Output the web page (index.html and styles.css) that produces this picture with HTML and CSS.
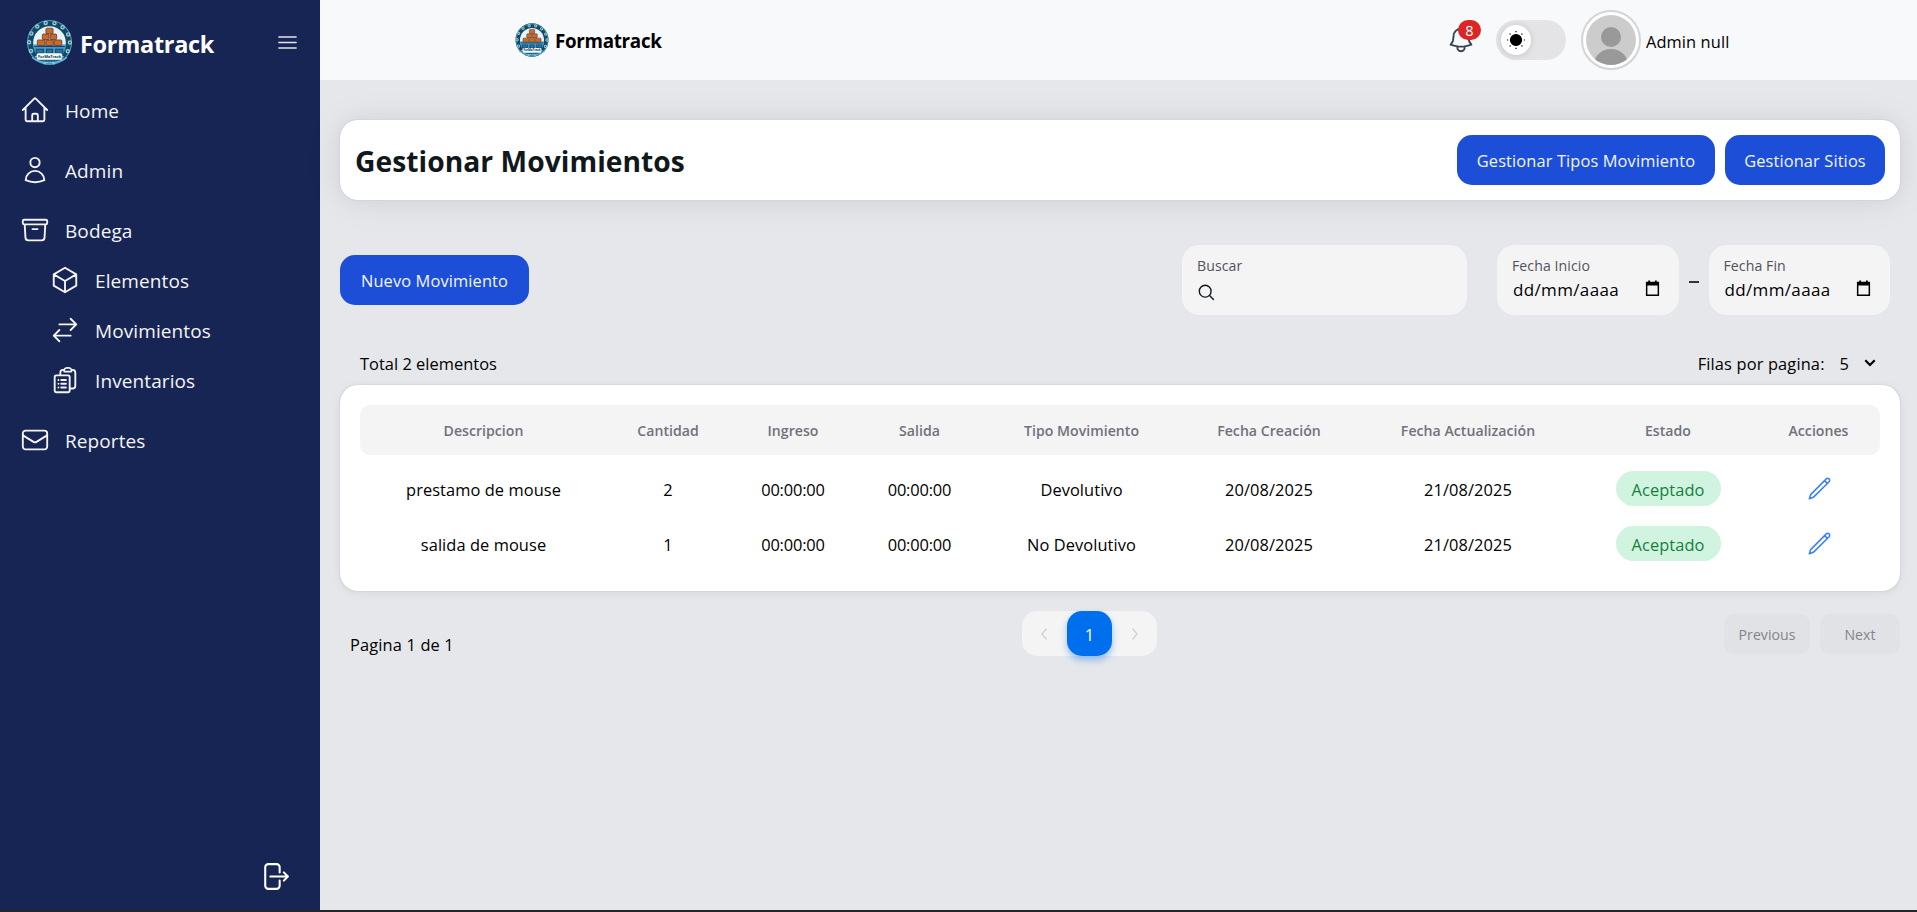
FILE: index.html
```html
<!DOCTYPE html>
<html lang="es">
<head>
<meta charset="utf-8">
<title>Formatrack</title>
<link rel="stylesheet" href="styles.css">
</head>
<body>
<svg class="defs" width="0" height="0">
  <symbol id="calendar" viewBox="0 0 14 16">
    <path d="M1.500 2.300h11v12h-11z" fill="none" stroke="#000" stroke-width="1.400"/>
    <path d="M1 2h12v3.200H1zM3 .4h1.700V3H3zM9.300.4H11V3H9.300z"/>
  </symbol>
  <symbol id="pencil" viewBox="0 0 24 24">
    <path d="m16.862 4.487 1.687-1.688a1.875 1.875 0 1 1 2.652 2.652L6.832 19.820a4.500 4.500 0 0 1-1.897 1.130l-2.685.8.8-2.685a4.500 4.500 0 0 1 1.130-1.897L16.863 4.487Zm0 0L19.500 7.125"/>
  </symbol>
</svg>
<div class="app">
  <aside class="sidebar">
    <div class="brand">
      <svg class="brand-logo" viewBox="0 0 48 46">
        <g id="logo">
          <ellipse cx="24" cy="23" rx="22" ry="22.300" fill="#124a63"/>
          <ellipse cx="24" cy="23" rx="21.500" ry="21.500" fill="none" stroke="#4c9cba" stroke-width="1"/>
          <ellipse cx="24" cy="23" rx="20" ry="19.500" fill="none" stroke="#9cc9d6" stroke-width="4.400" stroke-linecap="round" stroke-dasharray="0 8.860"/>
          <ellipse cx="24" cy="23" rx="20" ry="19.500" fill="none" stroke="#25637a" stroke-width="1.800" stroke-linecap="round" stroke-dasharray="0 8.860"/>
          <ellipse cx="24" cy="23" rx="16" ry="16" fill="#e4f3fa"/>
          <path d="M8 25h32a16 16 0 0 1-32 0Z" fill="#3d9bd0"/>
          <g fill="#c9692c" stroke="#56331f" stroke-width=".7">
            <rect x="20.500" y="9" width="7" height="5.500" rx="1"/>
            <rect x="17" y="14.700" width="6.500" height="5.500" rx="1"/><rect x="24.500" y="14.700" width="6.500" height="5.500" rx="1"/>
            <rect x="12" y="20.500" width="7.500" height="5.500" rx="1"/><rect x="20.300" y="20.500" width="7.500" height="5.500" rx="1"/><rect x="28.600" y="20.500" width="7.500" height="5.500" rx="1"/>
          </g>
          <path d="M9 27h30M11 29.500h7v4h-7zm10 0h6v4h-6zm9 0h7v4h-7z" fill="#2d719a" stroke="#174966" stroke-width="1"/>
          <path d="M7 37.500a22 15 0 0 0 34 0" fill="#1d6689" stroke="#65b9dc" stroke-width="1.500"/>
          <rect x="11.500" y="33.500" width="25" height="6.500" rx="1.800" fill="#f3fbfd"/>
          <path d="M19 42.300h10" stroke="#9ed4e5" stroke-width="1" stroke-dasharray="1.400 1.200"/>
          <text x="24" y="38.300" text-anchor="middle" font-size="4" letter-spacing="-.1" font-weight="700" fill="#173e4d">ForMaTrack</text>
        </g>
      </svg>
      <span class="brand-name">Formatrack</span>
      <svg class="icon icon-menu" viewBox="0 0 24 24"><path d="M3.750 6.750h16.500M3.750 12h16.500m-16.500 5.250h16.500"/></svg>
    </div>
    <nav class="nav">
      <a class="nav-item"><svg class="icon" viewBox="0 0 24 24"><path d="m2.250 12 8.954-8.955c.44-.439 1.152-.439 1.591 0L21.750 12M4.500 9.750v10.125c0 .621.504 1.125 1.125 1.125H9.750v-4.875c0-.621.504-1.125 1.125-1.125h2.250c.621 0 1.125.504 1.125 1.125V21h4.125c.621 0 1.125-.504 1.125-1.125V9.750M8.250 21h8.250"/></svg><span>Home</span></a>
      <a class="nav-item"><svg class="icon" viewBox="0 0 24 24"><path d="M15.750 6a3.750 3.750 0 1 1-7.500 0 3.750 3.750 0 0 1 7.500 0ZM4.501 20.118a7.500 7.500 0 0 1 14.998 0A17.933 17.933 0 0 1 12 21.750c-2.676 0-5.216-.584-7.499-1.632Z"/></svg><span>Admin</span></a>
      <a class="nav-item"><svg class="icon" viewBox="0 0 24 24"><path d="m20.250 7.500-.625 10.632a2.250 2.250 0 0 1-2.247 2.118H6.622a2.250 2.250 0 0 1-2.247-2.118L3.750 7.500M10 11.250h4M3.375 7.500h17.250c.621 0 1.125-.504 1.125-1.125v-1.500c0-.621-.504-1.125-1.125-1.125H3.375c-.621 0-1.125.504-1.125 1.125v1.500c0 .621.504 1.125 1.125 1.125Z"/></svg><span>Bodega</span></a>
      <div class="subnav">
        <a class="nav-item sub"><svg class="icon" viewBox="0 0 24 24"><path d="m21 7.500-9-5.250L3 7.500m18 0-9 5.250m9-5.250v9l-9 5.250M3 7.500l9 5.250M3 7.500v9l9 5.250m0-9v9"/></svg><span>Elementos</span></a>
        <a class="nav-item sub"><svg class="icon" viewBox="0 0 24 24"><path d="M7.500 21 3 16.500m0 0L7.500 12M3 16.500h13.500m0-13.500L21 7.500m0 0L16.500 12M21 7.500H7.500"/></svg><span>Movimientos</span></a>
        <a class="nav-item sub"><svg class="icon" viewBox="0 0 24 24"><path d="M9 12h3.750M9 15h3.750M9 18h3.750m3 .75H18a2.250 2.250 0 0 0 2.250-2.250V6.108c0-1.135-.845-2.098-1.976-2.192a48.424 48.424 0 0 0-1.123-.08m-5.801 0c-.065.21-.1.433-.1.664 0 .414.336.75.75.75h4.500a.75.75 0 0 0 .75-.75 2.250 2.250 0 0 0-.1-.664m-5.800 0A2.251 2.251 0 0 1 13.500 2.250H15c1.012 0 1.867.668 2.150 1.586m-5.800 0c-.376.023-.75.05-1.124.08C9.095 4.010 8.250 4.973 8.250 6.108V8.250m0 0H4.875c-.621 0-1.125.504-1.125 1.125v11.250c0 .621.504 1.125 1.125 1.125h9.750c.621 0 1.125-.504 1.125-1.125V9.375c0-.621-.504-1.125-1.125-1.125H8.250ZM6.750 12h.008v.008H6.750V12Zm0 3h.008v.008H6.750V15Zm0 3h.008v.008H6.750V18Z"/></svg><span>Inventarios</span></a>
      </div>
      <a class="nav-item"><svg class="icon" viewBox="0 0 24 24"><path d="M21.750 6.750v10.500a2.250 2.250 0 0 1-2.250 2.250h-15a2.250 2.250 0 0 1-2.250-2.250V6.750m19.500 0A2.250 2.250 0 0 0 19.500 4.500h-15a2.250 2.250 0 0 0-2.250 2.250m19.500 0v.243a2.250 2.250 0 0 1-1.070 1.916l-7.500 4.615a2.250 2.250 0 0 1-2.360 0L3.320 8.910a2.250 2.250 0 0 1-1.070-1.916V6.750"/></svg><span>Reportes</span></a>
    </nav>
    <svg class="icon icon-logout" viewBox="0 0 24 24"><path d="M15.750 9V5.250A2.250 2.250 0 0 0 13.500 3h-6a2.250 2.250 0 0 0-2.250 2.250v13.500A2.250 2.250 0 0 0 7.500 21h6a2.250 2.250 0 0 0 2.250-2.250V15m3 0 3-3m0 0-3-3m3 3H9"/></svg>
  </aside>

  <div class="page">
    <header class="topbar">
      <div class="top-brand"><svg class="top-logo" viewBox="0 0 48 46"><use href="#logo"/></svg><span class="top-name">Formatrack</span></div>
      <div class="top-tools">
        <div class="bell">
          <svg class="icon" viewBox="0 0 24 24"><path d="M14.857 17.082a23.848 23.848 0 0 0 5.454-1.310A8.967 8.967 0 0 1 18 9.750V9A6 6 0 0 0 6 9v.75a8.967 8.967 0 0 1-2.312 6.022c1.733.64 3.560 1.085 5.455 1.310m5.714 0a24.255 24.255 0 0 1-5.714 0m5.714 0a3 3 0 1 1-5.714 0"/></svg>
          <span class="badge">8</span>
        </div>
        <div class="toggle"><div class="thumb">
          <svg class="sun" viewBox="0 0 20 20"><circle cx="10" cy="10" r="5.500"/><path d="M10 1v1.200M10 17.800V19M1 10h1.200M17.800 10H19M3.600 3.600l.9.9M15.500 15.500l.9.9M3.600 16.400l.9-.9M15.500 4.500l.9-.9"/></svg>
        </div></div>
        <div class="avatar"><svg class="avatar-img" viewBox="0 0 50 50"><path fill="#ccc" d="M0 0h50v50H0z"/><circle cx="25" cy="22" r="10" fill="#999"/><path d="M8 50c0-9 7-16 17-16s17 7 17 16z" fill="#999"/></svg></div>
        <span class="user">Admin null</span>
      </div>
    </header>

    <main class="main">
      <section class="title-card">
        <h1 class="title">Gestionar Movimientos</h1>
        <div class="actions"><button class="btn wide">Gestionar Tipos Movimiento</button><button class="btn sites">Gestionar Sitios</button></div>
      </section>

      <section class="filters">
        <button class="btn new">Nuevo Movimiento</button>
        <div class="fields">
          <div class="field search"><span class="label">Buscar</span>
            <svg class="icon-search" viewBox="0 0 17 17"><circle cx="7.200" cy="7.200" r="5.900"/><path d="m11.800 11.800 3.600 3.700"/></svg></div>
          <div class="field date"><span class="label">Fecha Inicio</span><div class="value"><span>dd/mm/aaaa</span><svg class="cal"><use href="#calendar"/></svg></div></div>
          <span class="dash"></span>
          <div class="field date"><span class="label">Fecha Fin</span><div class="value"><span>dd/mm/aaaa</span><svg class="cal"><use href="#calendar"/></svg></div></div>
        </div>
      </section>

      <div class="summary">
        <span class="total">Total 2 elementos</span>
        <div class="rows-per"><span class="rows-label">Filas por pagina:</span><span>5</span><svg class="chev" viewBox="0 0 12 8"><path d="m1.300 1.300 4.700 4.700 4.700-4.700"/></svg></div>
      </div>

      <section class="table-card">
        <div class="row head"><span>Descripcion</span><span>Cantidad</span><span>Ingreso</span><span>Salida</span><span>Tipo Movimiento</span><span>Fecha Creación</span><span>Fecha Actualización</span><span>Estado</span><span>Acciones</span></div>
        <div class="row item"><span>prestamo de mouse</span><span>2</span><span class="time">00:00:00</span><span class="time">00:00:00</span><span>Devolutivo</span><span>20/08/2025</span><span>21/08/2025</span><span class="chip">Aceptado</span><svg class="edit"><use href="#pencil"/></svg></div>
        <div class="row item"><span>salida de mouse</span><span>1</span><span class="time">00:00:00</span><span class="time">00:00:00</span><span>No Devolutivo</span><span>20/08/2025</span><span>21/08/2025</span><span class="chip">Aceptado</span><svg class="edit"><use href="#pencil"/></svg></div>
      </section>

      <footer class="footer">
        <span class="page-info">Pagina 1 de 1</span>
        <div class="pager">
          <svg class="arrow" viewBox="0 0 10 14"><path d="M6.500 1.500 2 7l4.500 5.500"/></svg>
          <span class="current">1</span>
          <svg class="arrow" viewBox="0 0 10 14"><path d="M2.500 1.500 7 7l-4.500 5.500"/></svg>
        </div>
        <div class="steps"><button class="step prev">Previous</button><button class="step next">Next</button></div>
      </footer>
    </main>
  </div>
</div>
</body>
</html>
```
FILE: styles.css
```css
* { box-sizing: border-box; }
body {
  margin: 0;
  height: 912px;
  overflow: hidden;
  border-bottom: 2px solid #252528;
  font-family: "Open Sans", "Noto Sans", sans-serif;
  font-size: 16.4px;
  color: #000;
  letter-spacing: 0.03px;
}
button { font: inherit; letter-spacing: inherit; border: 0; padding: 0; }
.defs { position: absolute; }
.app { display: flex; height: 910px; }
.icon { width: 30px; height: 30px; flex: none; fill: none; stroke: currentColor; stroke-width: 1.5; stroke-linecap: round; stroke-linejoin: round; }

.sidebar { width: 320px; flex: none; display: flex; flex-direction: column; background: #172554; color: #f4f4f5; }
.brand { display: flex; align-items: center; height: 85px; padding: 0 20px 0 25px; }
.brand-logo { width: 49px; height: 47px; flex: none; }
.brand-name { margin-left: 6px; padding-top: 2px; font-size: 23.5px; font-weight: 700; letter-spacing: -0.3px; color: #fff; }
.icon-menu { width: 25px; height: 25px; margin-left: auto; color: #e4e4e7; }
.nav { display: flex; flex-direction: column; margin-top: -5px; }
.nav-item { display: flex; align-items: center; gap: 15px; height: 60px; padding: 0 20px; font-size: 19px; font-weight: 500; letter-spacing: 0.1px; }
.subnav { margin: -5px 0 5px; padding-left: 30px; }
.sub { height: 50px; }
.nav-item span { padding-top: 1px; }
.icon-logout { width: 33px; height: 33px; margin: auto 29px 17px auto; color: #fff; }

.page { flex: 1; display: flex; flex-direction: column; background: #e5e7eb; }
.topbar { height: 80px; display: flex; align-items: center; justify-content: space-between; padding: 0 187px 0 194px; background: #f8f9fb; color: #000; }
.top-brand { display: flex; align-items: center; gap: 5px; }
.top-logo { width: 36px; height: 36px; }
.top-name { padding-top: 2px; font-size: 18.8px; font-weight: 700; letter-spacing: -0.3px; }
.top-tools { display: flex; align-items: center; }
.bell { position: relative; width: 30px; height: 30px; margin-right: 20px; color: #374151; }
.badge { position: absolute; left: 12px; top: -5px; width: 23px; height: 20px; border-radius: 10px; background: #dc2626; color: #fff; font-size: 14.5px; line-height: 21px; text-align: center; }
.toggle { width: 70px; height: 40px; padding: 5px; border-radius: 20px; background: #e4e4e7; }
.thumb { width: 30px; height: 30px; padding: 5px; border-radius: 50%; background: #fff; box-shadow: 0 0 6px rgba(0,0,0,.08), 0 2px 10px rgba(0,0,0,.06); }
.sun { display: block; width: 20px; height: 20px; stroke: #000; stroke-width: 1.2; }
.avatar { width: 60px; height: 60px; margin-left: 15px; padding: 3px; border: 2px solid #d4d4d8; border-radius: 50%; background: #fff; }
.avatar-img { display: block; width: 50px; height: 50px; border-radius: 50%; }
.user { width: 84px; margin-left: 5px; padding-top: 2px; white-space: nowrap; letter-spacing: 0.1px; }

.main { padding: 40px 17px 0 20px; }
.title-card { display: flex; align-items: center; justify-content: space-between; height: 80px; padding: 0 15px; border-radius: 17.5px; background: #fff; box-shadow: 0 0 19px rgba(0,0,0,.03), 0 2px 37px rgba(0,0,0,.08), 0 0 1px rgba(0,0,0,.3); }
.title { margin: 0; padding-top: 1px; font-size: 28.2px; font-weight: 700; letter-spacing: 0.05px; color: #11181c; }
.actions { display: flex; gap: 10px; }
.btn { height: 50px; padding-top: 1px; border-radius: 15px; background: #1d4ed8; color: #f1f5ff; white-space: nowrap; letter-spacing: 0.12px; }
.wide { width: 258px; }
.sites { width: 160px; }
.new { width: 189px; }
.filters { display: flex; align-items: center; justify-content: space-between; height: 70px; margin-top: 45px; padding-right: 10px; }
.fields { display: flex; align-items: center; }
.field { height: 70px; padding: 10px 15px; border-radius: 17.5px; background: #f4f4f5; }
.search { width: 285px; margin-right: 30px; }
.date { width: 181.5px; }
.label { display: block; height: 22px; line-height: 21px; font-size: 14.1px; letter-spacing: 0.08px; color: #52525b; }
.icon-search { display: block; width: 17px; height: 17px; margin: 7px 0 0 1px; fill: none; stroke: #11181c; stroke-width: 1.4; stroke-linecap: round; }
.value { display: flex; align-items: center; justify-content: space-between; height: 25px; padding: 0 4px 0 1px; font-size: 17px; letter-spacing: 0.35px; }
.cal { width: 15px; height: 17px; margin-top: -3px; }
.dash { width: 10px; height: 1.5px; margin: 4px 10px 0; background: #333; }
.summary { display: flex; align-items: center; justify-content: space-between; height: 42px; margin-top: 28px; padding: 0 24px 2px 20px; }
.rows-per { display: flex; align-items: center; }
.rows-label { margin-right: 15px; letter-spacing: 0.15px; }
.chev { width: 12px; height: 8px; margin-left: 15px; fill: none; stroke: #000; stroke-width: 2.2; }

.table-card { height: 206px; padding: 20px; border-radius: 17.5px; background: #fff; box-shadow: 0 0 6px rgba(0,0,0,.02), 0 2px 12px rgba(0,0,0,.06), 0 0 1px rgba(0,0,0,.3); }
.row { display: grid; grid-template-columns: 247px 122px 128px 125px 199px 176px 222px 178px 123px; align-items: center; justify-items: center; height: 55px; }
.item span { padding-top: 2px; letter-spacing: 0.08px; }
.item .time { letter-spacing: -0.15px; }
.head { height: 50px; margin-bottom: 6px; border-radius: 10px; background: #f4f4f5; color: #71717a; font-size: 14.1px; font-weight: 600; }
.chip { width: 105px; height: 35px; border-radius: 18px; background: #d1f4e0; color: #15803d; line-height: 34px; text-align: center; }
.edit { width: 25px; height: 25px; margin-left: 1px; fill: none; stroke: #3b82f6; stroke-width: 1.5; stroke-linecap: round; stroke-linejoin: round; }

.footer { display: grid; grid-template-columns: 682px 135px 1fr; height: 45px; margin-top: 20px; }
.page-info { padding: 22px 0 0 10px; letter-spacing: 0.15px; }
.pager { display: grid; grid-template-columns: repeat(3, 45px); align-items: center; justify-items: center; border-radius: 15px; background: #f4f4f5; }
.current { width: 45px; height: 45px; border-radius: 15px; background: #006fee; color: #fff; line-height: 47px; text-align: center; box-shadow: 0 4px 7px rgba(0,111,238,.4); }
.arrow { width: 10px; height: 14px; fill: none; stroke: #cfcfd3; stroke-width: 1.2; }
.steps { display: flex; align-items: center; justify-content: flex-end; gap: 10px; }
.step { height: 40px; padding-top: 1px; border-radius: 10px; background: #e1e2e6; color: #84848b; font-size: 14.1px; }
.prev { width: 86px; }
.next { width: 80px; }
```
